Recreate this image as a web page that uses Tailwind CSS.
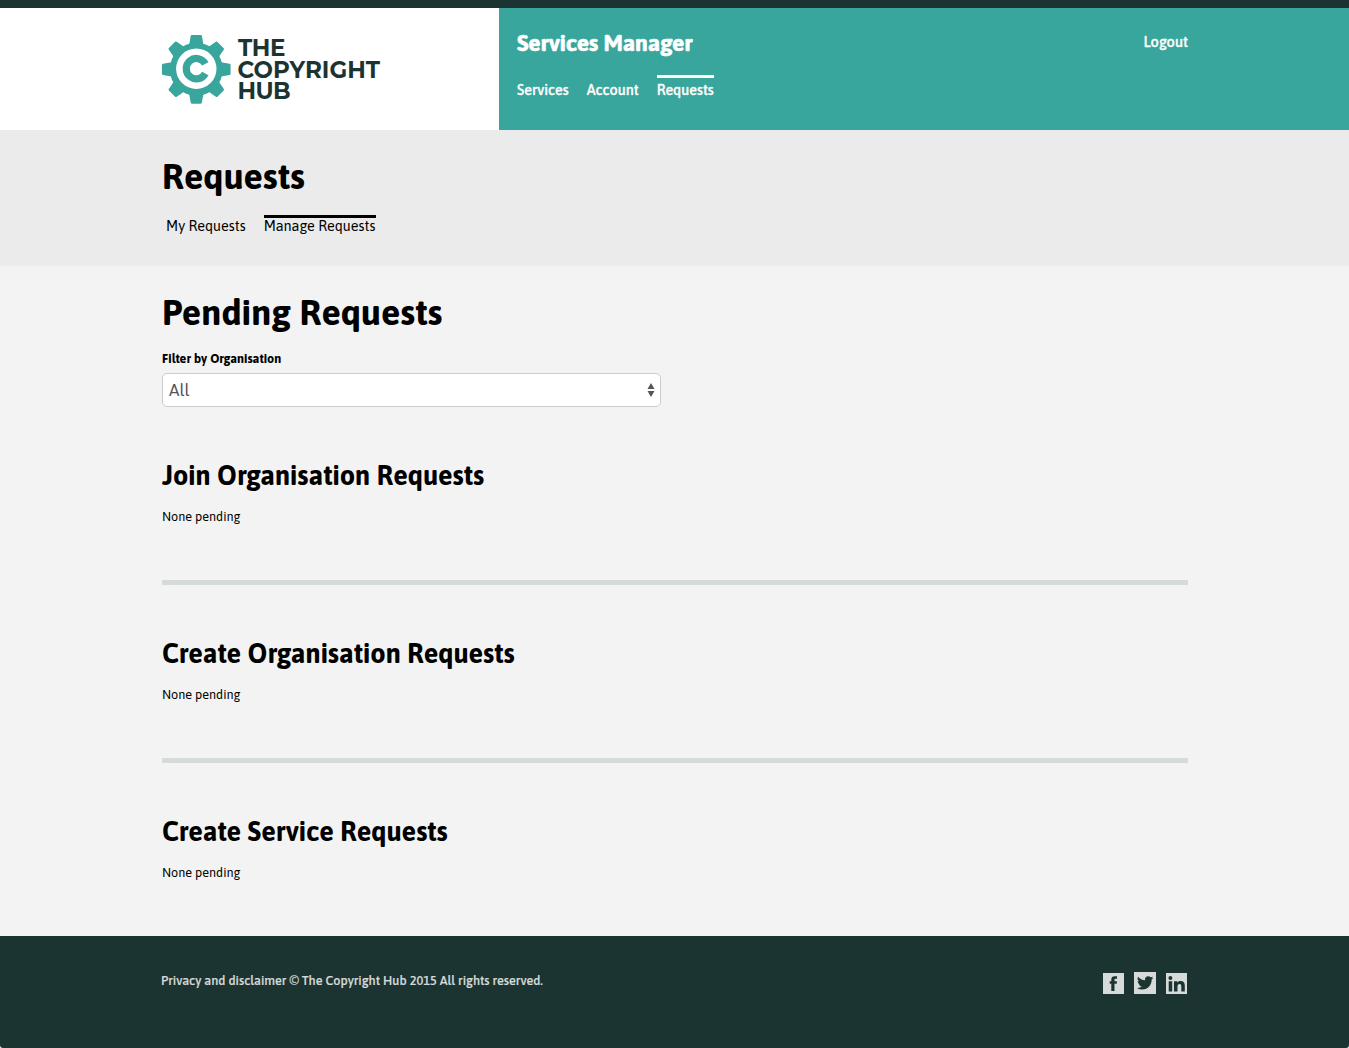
<!DOCTYPE html>
<html lang="en">
<head>
<meta charset="utf-8">
<title>Requests</title>
<script src="https://cdn.jsdelivr.net/npm/@tailwindcss/browser@4"></script>
</head>
<body class="bg-white font-[Asap,Lato,sans-serif] text-black whitespace-nowrap">
<div class="h-[1048px] flex flex-col overflow-hidden">
  <header class="shrink-0 h-[130px] border-t-8 border-[#1c3431] flex">
    <div class="w-[499px] pl-[161px] pt-6">
      <svg class="block" width="224" height="76" viewBox="161 32 224 76">
        <g fill="#38a69c">
          <circle cx="196.300" cy="69.300" r="26.500"/>
          <path id="t" d="M188.900 46 L190.700 36 Q190.900 35 191.900 35 H200.700 Q201.700 35 201.900 36 L203.700 46 V92.600 L201.900 102.600 Q201.700 103.700 200.700 103.700 H191.900 Q190.900 103.700 190.700 102.600 L188.900 92.600Z"/>
          <use href="#t" transform="rotate(45 196.3 69.3)"/>
          <use href="#t" transform="rotate(90 196.3 69.3)"/>
          <use href="#t" transform="rotate(135 196.3 69.3)"/>
        </g>
        <circle cx="196.300" cy="68.700" r="20.200" fill="#fff"/>
        <path d="M205.300 63.900 A10.100 10.200 0 1 0 205.300 73.500" fill="none" stroke="#38a69c" stroke-width="7.200"/>
        <g fill="#1c3431" font-family="Montserrat, 'Liberation Sans', sans-serif" font-weight="700" font-size="23">
          <text x="238" y="56" textLength="47.500">THE</text>
          <text x="237.500" y="77.700" textLength="142.500">COPYRIGHT</text>
          <text x="237.500" y="99" textLength="53">HUB</text>
        </g>
      </svg>
    </div>
    <div class="flex-1 bg-[#38a69c] text-white pl-[18px] pr-[161px] flex justify-between">
      <div class="pt-[21px]">
        <h1 class="text-[23px] leading-7 font-bold tracking-[-0.18px] [-webkit-text-stroke:0.5px_white]">Services Manager</h1>
        <nav class="mt-[18px] flex gap-[18px] text-[14.4px] leading-[25px] font-medium [-webkit-text-stroke:0.3px_white]">
          <a class="border-t-3 border-transparent">Services</a>
          <a class="border-t-3 border-transparent">Account</a>
          <a class="border-t-3 border-white">Requests</a>
        </nav>
      </div>
      <a class="self-start mt-[22px] text-[14.6px] leading-[23px] font-medium [-webkit-text-stroke:0.3px_white]">Logout</a>
    </div>
  </header>
  <section class="shrink-0 h-[136px] bg-[#ebebeb] px-[162px] pt-[24px]">
    <h2 class="text-[36px] leading-11 font-bold">Requests</h2>
    <nav class="mt-[17px] pl-1 flex gap-[18px] text-[14.4px] leading-[17px]">
      <a class="border-t-3 border-transparent">My Requests</a>
      <a class="w-[112.500px] border-t-3 border-black">Manage Requests</a>
    </nav>
  </section>
  <main class="flex-1 bg-[#f3f3f3] pl-[162px] pr-[161px] pt-[24px]">
    <h2 class="text-[36px] leading-11 font-bold">Pending Requests</h2>
    <label class="mt-4 block text-[12.6px] leading-[18px] font-bold">Filter by Organisation</label>
    <div class="mt-[5px] w-[499px] h-[34px] bg-white border border-[#ccc] rounded-[5px] flex items-center justify-between pl-1.5 pr-[5px] text-[17px] text-[#555]">
      <span class="pt-px">All</span>
      <svg width="8" height="16" viewBox="0 0 8 16" fill="#555"><path d="M4 1 7.500 7H.5ZM4 15 .5 9h7Z"/></svg>
    </div>
    <section class="mt-[51px]">
      <h3 class="text-[27.1px] leading-[35px] font-bold">Join Organisation Requests</h3>
      <p class="mt-[15px] text-[12.6px] leading-[18px]">None pending</p>
    </section>
    <hr class="mt-[54px] mb-[51px] h-[5px] border-0 bg-[#d6dbda]">
    <section>
      <h3 class="text-[27.1px] leading-[35px] font-bold">Create Organisation Requests</h3>
      <p class="mt-[15px] text-[12.6px] leading-[18px]">None pending</p>
    </section>
    <hr class="mt-[54px] mb-[51px] h-[5px] border-0 bg-[#d6dbda]">
    <section>
      <h3 class="text-[27.1px] leading-[35px] font-bold">Create Service Requests</h3>
      <p class="mt-[15px] text-[12.6px] leading-[18px]">None pending</p>
    </section>
  </main>
  <footer class="shrink-0 h-28 bg-[#1c3431] rounded-b-[3px] text-[#d6dbda] pl-[161px] pr-[162px] pt-[35px] flex justify-between items-start">
    <p class="pt-px text-[12.65px] leading-[18px] font-medium [-webkit-text-stroke:0.2px_#d6dbda]">Privacy and disclaimer © The Copyright Hub 2015 All rights reserved.</p>
    <div class="flex items-end gap-2.5 pt-px">
      <svg width="21" height="21" viewBox="0 0 21 21"><path fill="#d6dbda" d="M0 0h21v21H0z"/><path fill="#1c3431" d="M8.300 18v-7.300H6.700V8.200h1.600V6.800c0-2.400 1.200-3.500 3.300-3.500h2.400v2.500h-1.500c-.8 0-1 .4-1 1.100v1.300H14l-.3 2.500h-2.200V18z"/></svg>
      <svg width="22" height="22" viewBox="0 0 22 22"><path fill="#d6dbda" d="M0 0h22v22H0z"/><path fill="#1c3431" transform="translate(3 2.700) scale(.68)" d="M23.950 4.570a10 10 0 0 1-2.820.770 4.960 4.960 0 0 0 2.160-2.720c-.950.550-2 .950-3.130 1.180a4.920 4.920 0 0 0-8.380 4.480C7.690 8.100 4.070 6.130 1.640 3.160a4.920 4.920 0 0 0 1.520 6.570 4.900 4.900 0 0 1-2.230-.610v.060a4.920 4.920 0 0 0 3.950 4.830 5 5 0 0 1-2.210.080 4.940 4.940 0 0 0 4.600 3.420A9.870 9.870 0 0 1 0 19.540a14 14 0 0 0 7.550 2.210c9.050 0 14-7.500 14-13.980 0-.210 0-.420-.020-.630a9.940 9.940 0 0 0 2.460-2.550z"/></svg>
      <svg width="21" height="21" viewBox="0 0 21 21"><path fill="#d6dbda" d="M0 0h21v21H0z"/><circle cx="4.400" cy="5" r="2" fill="#1c3431"/><path fill="#1c3431" d="M2.700 8.200h3.500V18.500H2.700zM8 8.200h3.200v1.300c.7-1.100 1.700-1.600 3.100-1.600 3.300 0 4.500 1.900 4.500 4.900v5.700h-3.500v-5.200c0-1.400-.3-2.400-1.700-2.400s-2.100 1-2.100 2.400v5.200H8z"/></svg>
    </div>
  </footer>
</div>
</body>
</html>
